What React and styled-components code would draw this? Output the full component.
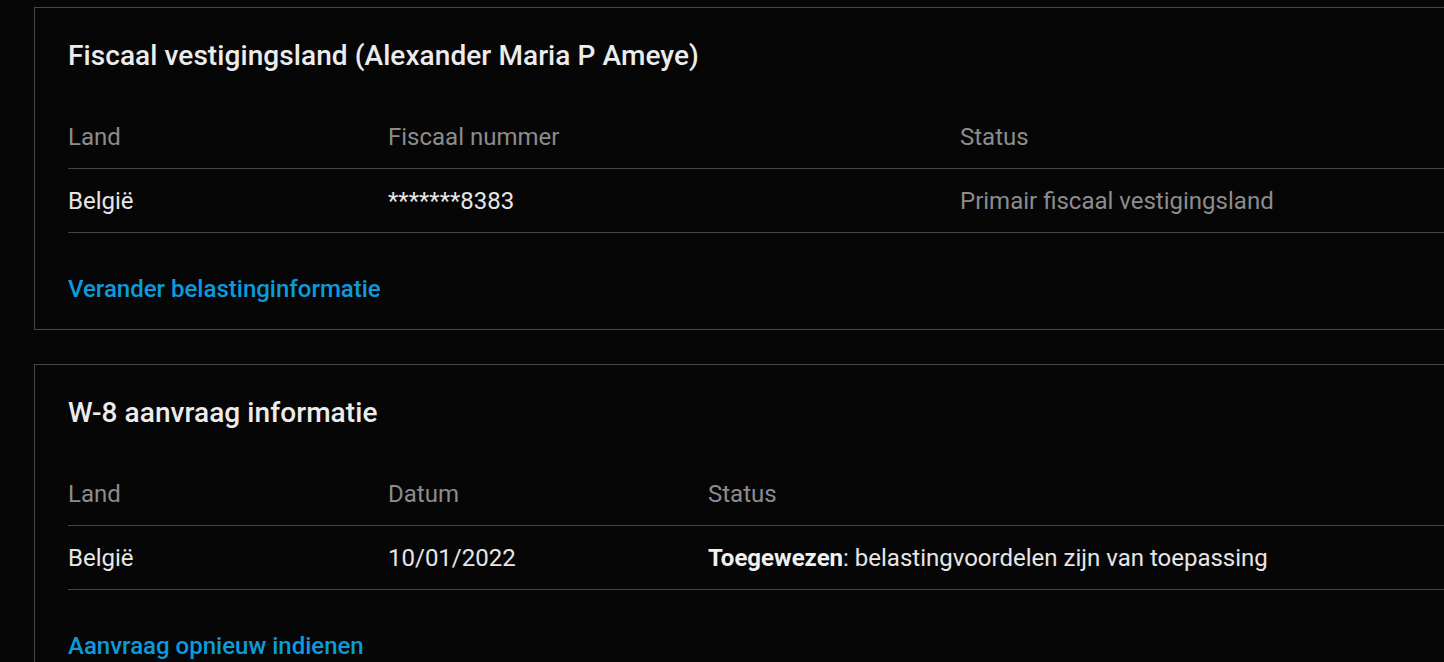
import styled, { createGlobalStyle } from "styled-components";

const GlobalStyle = createGlobalStyle`
  html, body {
    margin: 0;
    padding: 0;
    background: #060606;
    overflow: hidden;
  }
  body {
    font-family: Roboto, "Liberation Sans", sans-serif;
    color: #e6e6e6;
  }
`;

const Page = styled.main`
  width: 1500px;
  padding: 7px 0 0 34px;
  display: flex;
  flex-direction: column;
  gap: 34px;
`;

const Card = styled.section`
  border: 1px solid #474747;
  border-right: none;
  padding: 32px 0 26px 33px;
`;

const Title = styled.h2`
  margin: 0 0 33px;
  font-size: 28px;
  line-height: 32px;
  font-weight: 500;
  letter-spacing: 0.08px;
  color: #ececec;
`;

const Table = styled.div`
  display: flex;
  flex-direction: column;
`;

const Row = styled.div`
  display: grid;
  grid-template-columns: ${(p) => p.$cols};
  height: 64px;
  align-items: center;
  border-bottom: 1px solid #464646;
  box-sizing: border-box;
  font-size: 24px;
  line-height: 28px;
  color: ${(p) => (p.$head ? "#8c8c8c" : "#e6e6e6")};
`;

const Cell = styled.div`
  color: ${(p) => (p.$muted ? "#8c8c8c" : "inherit")};
  white-space: nowrap;
  b {
    font-weight: 700;
    color: #f0f0f0;
  }
`;

const Action = styled.a`
  display: inline-block;
  margin-top: 42px;
  font-size: 24px;
  line-height: 28px;
  font-weight: 500;
  color: #0b9bdc;
  text-decoration: none;
  cursor: pointer;
`;

function App() {
  return (
    <>
      <GlobalStyle />
      <Page>
        <Card>
          <Title>Fiscaal vestigingsland (Alexander Maria P Ameye)</Title>
          <Table>
            <Row $head $cols="320px 572px 1fr">
              <Cell>Land</Cell>
              <Cell>Fiscaal nummer</Cell>
              <Cell>Status</Cell>
            </Row>
            <Row $cols="320px 572px 1fr">
              <Cell>België</Cell>
              <Cell>*******8383</Cell>
              <Cell $muted>Primair fiscaal vestigingsland</Cell>
            </Row>
          </Table>
          <Action>Verander belastinginformatie</Action>
        </Card>

        <Card>
          <Title>W-8 aanvraag informatie</Title>
          <Table>
            <Row $head $cols="320px 320px 1fr">
              <Cell>Land</Cell>
              <Cell>Datum</Cell>
              <Cell>Status</Cell>
            </Row>
            <Row $cols="320px 320px 1fr">
              <Cell>België</Cell>
              <Cell>10/01/2022</Cell>
              <Cell>
                <b>Toegewezen</b>: belastingvoordelen zijn van toepassing
              </Cell>
            </Row>
          </Table>
          <Action>Aanvraag opnieuw indienen</Action>
        </Card>
      </Page>
    </>
  );
}

export default App;
